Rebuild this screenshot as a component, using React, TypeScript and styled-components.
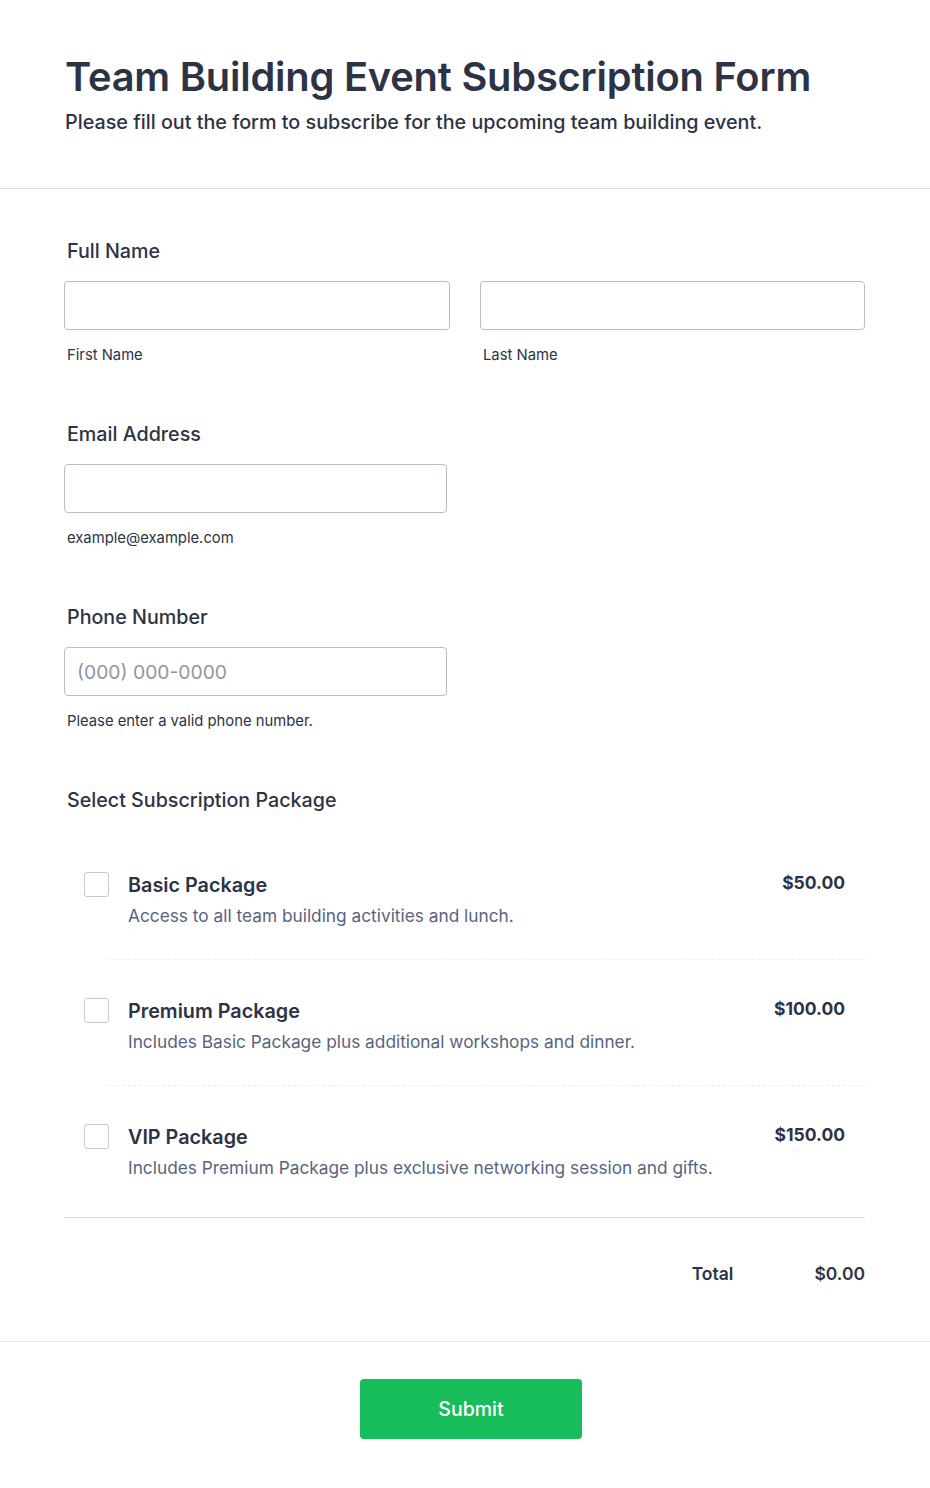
import React from "react";
import styled, { createGlobalStyle } from "styled-components";

const Global = createGlobalStyle`
  html, body { margin: 0; padding: 0; background: #fff; }
  body { font-family: Inter, "Noto Sans", sans-serif; color: #2c3345; }
  * { box-sizing: border-box; }
`;

const Page = styled.div`
  width: 930px;
  background: #fff;
`;

const Header = styled.header`
  padding: 52px 64px 54px 65px;
  border-bottom: 1px solid #d8dae6;
`;

const Title = styled.h1`
  margin: 0;
  font-size: 39.8px;
  line-height: 50px;
  font-weight: 600;
  color: #2c3345;
  letter-spacing: -0.2px;
`;

const Subtitle = styled.p`
  margin: 8px 0 0;
  font-size: 19.75px;
  line-height: 24px;
  font-weight: 500;
  color: #2c3345;
`;

const Body = styled.div`
  padding: 50px 65px 0 64px;
  display: flex;
  flex-direction: column;
`;

const Field = styled.div`
  display: flex;
  flex-direction: column;
  margin-bottom: 58px;
`;

const Label = styled.div<{ $tight?: boolean }>`
  font-size: 19.7px;
  line-height: 24px;
  font-weight: 500;
  color: #2c3345;
  padding-left: 3px;
  margin-bottom: ${(p) => (p.$tight ? "0" : "18px")};
`;

const Row = styled.div`
  display: grid;
  grid-template-columns: 386px 385px;
  gap: 30px;
`;

const Col = styled.div`
  display: flex;
  flex-direction: column;
`;

const Input = styled.input<{ $w?: number }>`
  width: ${(p) => (p.$w ? `${p.$w}px` : "100%")};
  height: 49px;
  border: 1px solid #b8bdc9;
  border-radius: 4px;
  padding: 0 12px;
  font-family: Inter, "Noto Sans", sans-serif;
  font-size: 19.3px;
  color: #2c3345;
  outline: none;
  &::placeholder { color: #8f96a3; }
`;

const Sub = styled.div`
  font-size: 14.8px;
  line-height: 18px;
  color: #2c3345;
  padding-left: 3px;
  margin-top: 16px;
`;

const Packages = styled.div`
  display: flex;
  flex-direction: column;
  margin-top: 22px;
  padding-bottom: 5px;
  border-bottom: 1px solid #dadce6;
`;

const Item = styled.div<{ $last?: boolean }>`
  display: grid;
  grid-template-columns: 44px 1fr auto;
  align-items: start;
  margin-top: 12px;
  padding: 26px 20px 0 20px;
  height: 114px;
  position: relative;
  &::after {
    content: "";
    display: ${(p) => (p.$last ? "none" : "block")};
    position: absolute;
    left: 44px;
    right: 0;
    bottom: 0;
    border-bottom: 1px dashed #eceef3;
  }
`;

const Box = styled.span`
  width: 25px;
  height: 25px;
  border: 1px solid #c5c9d3;
  border-radius: 3px;
`;

const Info = styled.div`
  display: flex;
  flex-direction: column;
`;

const ItemTitle = styled.div`
  font-size: 19.8px;
  line-height: 26px;
  font-weight: 600;
  color: #2c3345;
`;

const ItemDesc = styled.div`
  font-size: 17.3px;
  line-height: 22px;
  color: #57647e;
  margin-top: 7px;
`;

const Price = styled.div`
  font-size: 17.5px;
  line-height: 22px;
  font-weight: 700;
  color: #2c3345;
`;

const TotalRow = styled.div`
  display: flex;
  justify-content: flex-end;
  align-items: center;
  gap: 81px;
  padding: 45px 0 56px;
  font-size: 17.5px;
  line-height: 22px;
  font-weight: 600;
  color: #2c3345;
`;

const Footer = styled.div`
  border-top: 1px solid #e6e8ef;
  display: flex;
  justify-content: center;
  padding: 37px 0 50px 12px;
`;

const Submit = styled.button`
  width: 222px;
  height: 60px;
  border: none;
  border-radius: 4px;
  background: #18bd5b;
  color: #fff;
  font-family: Inter, "Noto Sans", sans-serif;
  font-size: 19.5px;
  font-weight: 500;
`;

const packages = [
  { title: "Basic Package", desc: "Access to all team building activities and lunch.", price: "$50.00" },
  { title: "Premium Package", desc: "Includes Basic Package plus additional workshops and dinner.", price: "$100.00" },
  { title: "VIP Package", desc: "Includes Premium Package plus exclusive networking session and gifts.", price: "$150.00" },
];

export default function App() {
  return (
    <Page>
      <Global />
      <Header>
        <Title>Team Building Event Subscription Form</Title>
        <Subtitle>Please fill out the form to subscribe for the upcoming team building event.</Subtitle>
      </Header>
      <Body>
        <Field>
          <Label>Full Name</Label>
          <Row>
            <Col>
              <Input />
              <Sub>First Name</Sub>
            </Col>
            <Col>
              <Input />
              <Sub>Last Name</Sub>
            </Col>
          </Row>
        </Field>
        <Field>
          <Label>Email Address</Label>
          <Input $w={383} />
          <Sub>example@example.com</Sub>
        </Field>
        <Field>
          <Label>Phone Number</Label>
          <Input $w={383} placeholder="(000) 000-0000" />
          <Sub>Please enter a valid phone number.</Sub>
        </Field>
        <Label $tight>Select Subscription Package</Label>
        <Packages>
          {packages.map((p, i) => (
            <Item key={p.title} $last={i === packages.length - 1}>
              <Box />
              <Info>
                <ItemTitle>{p.title}</ItemTitle>
                <ItemDesc>{p.desc}</ItemDesc>
              </Info>
              <Price>{p.price}</Price>
            </Item>
          ))}
        </Packages>
        <TotalRow>
          <span>Total</span>
          <span>$0.00</span>
        </TotalRow>
      </Body>
      <Footer>
        <Submit>Submit</Submit>
      </Footer>
    </Page>
  );
}
